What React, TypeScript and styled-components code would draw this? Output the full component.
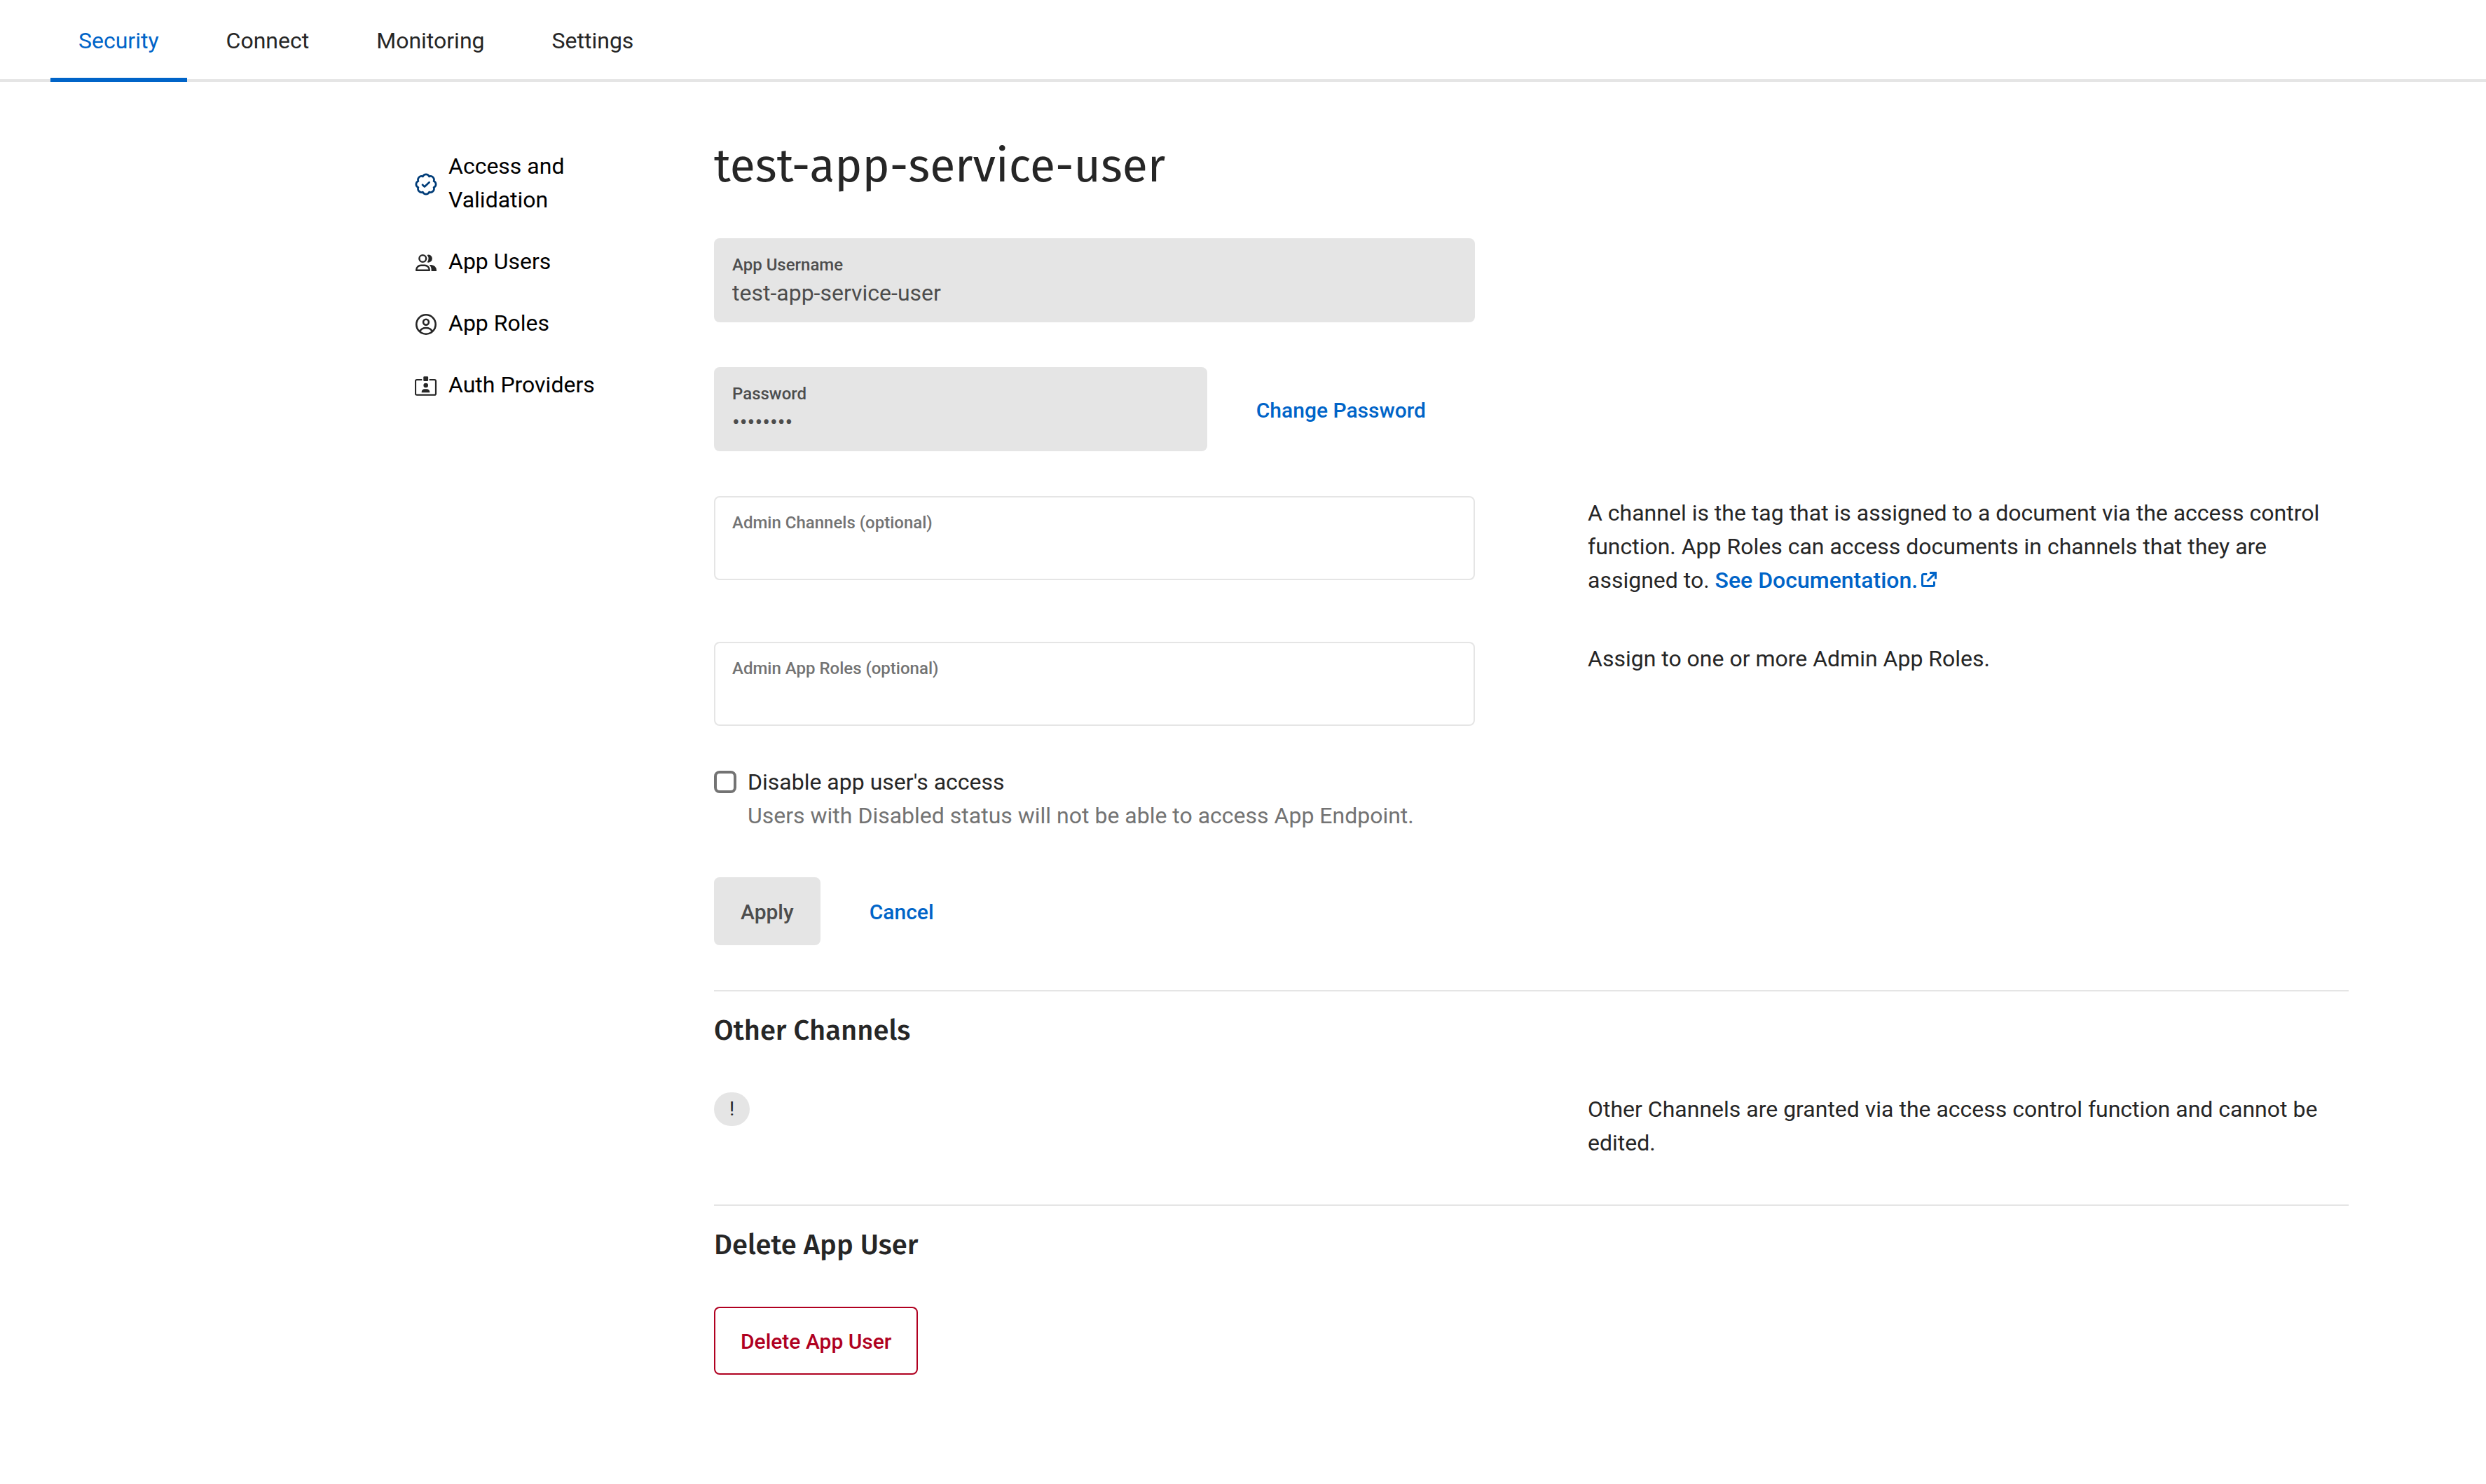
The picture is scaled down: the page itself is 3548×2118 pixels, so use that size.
import React, { useState } from "react";
import styled, { createGlobalStyle, css } from "styled-components";

const color = {
  ink: "#262626",
  body: "#4d4d4d",
  muted: "#737373",
  line: "#e5e5e5",
  link: "#0064c8",
  navy: "#003c78",
  danger: "#b00020",
};

const textFont = `Roboto, "Liberation Sans", sans-serif`;
const titleFont = `"Fira Sans", "Noto Sans", "Open Sans", sans-serif`;

const GlobalStyle = createGlobalStyle`
  *, *::before, *::after { box-sizing: border-box; }
  body {
    margin: 0;
    background: #fff;
    color: ${color.ink};
    font: 400 32px/48px ${textFont};
  }
  h1, h2, p, ul { margin: 0; padding: 0; }
  button, input { font: inherit; }
  a { text-decoration: none; }
`;

const TabBar = styled.nav`
  display: flex;
  gap: 16px;
  padding: 0 72px;
  border-bottom: 4px solid ${color.line};
`;

const Tab = styled.a<{ $active?: boolean }>`
  padding: 34px 40px 29px;
  margin-bottom: -4px;
  border-bottom: 6px solid ${(p) => (p.$active ? color.link : "transparent")};
  color: ${(p) => (p.$active ? color.link : color.ink)};
`;

const Page = styled.div`
  display: flex;
  gap: 160px;
  padding: 84px 196px 92px 592px;
`;

const SideNav = styled.ul`
  flex: 0 0 267px;
  display: flex;
  flex-direction: column;
  gap: 40px;
  padding-top: 12px;
  list-style: none;
`;

const SideLink = styled.a`
  display: flex;
  align-items: center;
  gap: 16px;
  color: #000;
`;

const SideIcon = styled.svg<{ $tone?: string }>`
  flex: none;
  width: 32px;
  height: 32px;
  margin-top: 4px;
  color: ${(p) => p.$tone || color.ink};
`;

const Main = styled.main`
  flex: 1;
  min-width: 0;
`;

const Title = styled.h1`
  font: 400 66px/72px ${titleFont};
`;

const Form = styled.form`
  display: flex;
  flex-direction: column;
  margin-top: 67px;
`;

const Row = styled.div<{ $space?: number }>`
  display: grid;
  grid-template-columns: minmax(0, 1fr) minmax(0, 1fr);
  column-gap: 161px;
  align-items: start;
  margin-bottom: ${(p) => p.$space ?? 64}px;
`;

const Inline = styled.div`
  display: flex;
  align-items: center;
  gap: 32px;
  padding-right: 32px;
`;

const Field = styled.div<{ $filled?: boolean }>`
  flex: 1;
  display: flex;
  flex-direction: column;
  height: 120px;
  padding: 20px 24px;
  border: 2px solid ${color.line};
  border-radius: 8px;
  background: ${(p) => (p.$filled ? color.line : "#fff")};
  color: ${(p) => (p.$filled ? color.body : color.muted)};
`;

const FieldLabel = styled.label`
  font-size: 24px;
  font-weight: 500;
  line-height: 32px;
`;

const FieldInput = styled.input`
  width: 100%;
  height: 48px;
  padding: 0;
  border: 0;
  outline: 0;
  background: transparent;
  color: inherit;
`;

const Hint = styled.p``;

const DocLink = styled.a`
  color: ${color.link};
  font-weight: 500;
`;

const LinkIcon = styled.svg`
  width: 24px;
  height: 24px;
  margin-left: 4px;
`;

const CheckRow = styled.div`
  display: grid;
  grid-template-columns: 32px 1fr;
  column-gap: 16px;
  align-items: center;
`;

const CheckBox = styled.input`
  appearance: none;
  width: 32px;
  height: 32px;
  margin: 0;
  border: 4px solid ${color.muted};
  border-radius: 8px;
  background: #fff;
  &:checked { background: ${color.link}; border-color: ${color.link}; }
`;

const CheckHelp = styled.p`
  grid-column: 2;
  color: ${color.muted};
`;

const Button = styled.button<{ $kind: "muted" | "text" | "danger" }>`
  padding: 25px 36px 23px;
  border: 2px solid transparent;
  border-radius: 8px;
  background: transparent;
  font-size: 30px;
  font-weight: 500;
  line-height: 45px;
  white-space: nowrap;
  ${(p) => p.$kind === "muted" && css`background: ${color.line}; border-color: ${color.line}; color: ${color.body};`}
  ${(p) => p.$kind === "text" && css`color: ${color.link};`}
  ${(p) => p.$kind === "danger" && css`border-color: ${color.danger}; color: ${color.danger};`}
`;

const Actions = styled(Inline)`
  padding: 64px 0;
`;

const Section = styled.section`
  border-top: 2px solid ${color.line};
  padding: 32px 0 64px;
`;

const SectionTitle = styled.h2`
  margin-bottom: 64px;
  font: 500 40px/48px ${titleFont};
`;

const Badge = styled.span`
  justify-self: start;
  padding: 0 22px;
  border-radius: 24px;
  background: ${color.line};
  font-size: 28px;
`;

const scallop = (() => {
  const lobes = 8;
  const pt = (a: number, r: number) =>
    `${(16 + r * Math.cos(a)).toFixed(2)} ${(16 + r * Math.sin(a)).toFixed(2)}`;
  const half = Math.PI / lobes;
  let d = `M${pt(-Math.PI / 2 - half, 12)}`;
  for (let i = 0; i < lobes; i++) {
    const end = -Math.PI / 2 - half + (i + 1) * half * 2;
    d += `A5 5 0 0 1 ${pt(end, 12)}`;
  }
  return d + "Z";
})();

const VerifiedIcon = () => (
  <SideIcon viewBox="0 0 32 32" fill="none" stroke="currentColor" strokeWidth="2.7" strokeLinejoin="round" strokeLinecap="round" $tone={color.navy} aria-hidden>
    <path d={scallop} />
    <path d="M11 16.8l2.9 2.6 6.7-6.2" />
  </SideIcon>
);

const UsersIcon = () => (
  <SideIcon viewBox="0 0 32 32" fill="none" stroke="currentColor" strokeWidth="2.4" aria-hidden>
    <circle cx="11.3" cy="10" r="4.9" />
    <path d="M2.2 26.8v-.6a6.6 6.6 0 0 1 6.6-6.4h5.4a6.6 6.6 0 0 1 6.6 6.4v.6z" strokeLinejoin="round" />
    <path d="M17.6 4.9a5.5 5.5 0 1 1 0 10.4a8.500 8.500 0 0 0 0-10.400z" fill="currentColor" stroke="none" />
    <path d="M21.200 19h2.200a7.800 7.800 0 0 1 7.600 7.800v1.200h-7.400v-1.600a9.600 9.600 0 0 0-3-7.400z" fill="currentColor" stroke="none" />
  </SideIcon>
);

const RoleIcon = () => (
  <SideIcon viewBox="0 0 32 32" fill="none" stroke="currentColor" strokeWidth="2.6" aria-hidden>
    <circle cx="16" cy="16" r="13.7" />
    <circle cx="16" cy="12.7" r="3.9" />
    <path d="M7 26C8.800 22.500 12.200 21 16 21s7.200 1.500 9 5" />
  </SideIcon>
);

const ProviderIcon = () => (
  <SideIcon viewBox="0 0 32 32" fill="none" stroke="currentColor" strokeWidth="2.2" aria-hidden>
    <path d="M10.300 7H3a2 2 0 0 0-2 2v17.700a2 2 0 0 0 2 2h25a2 2 0 0 0 2-2V9a2 2 0 0 0-2-2h-7.300" />
    <rect x="12.300" y="2.300" width="6.800" height="6.700" rx="1.200" fill="currentColor" stroke="none" />
    <circle cx="15.700" cy="15" r="3.300" fill="currentColor" stroke="none" />
    <path d="M9.700 25.300v-.8a4.200 4.200 0 0 1 4.200-4.200h3.200a4.200 4.200 0 0 1 4.200 4.200v.8z" fill="currentColor" stroke="none" />
  </SideIcon>
);

const ExternalIcon = () => (
  <LinkIcon viewBox="0 0 24 24" fill="none" stroke="currentColor" strokeWidth="3" aria-hidden>
    <path d="M9.300 4.500H4.500a2 2 0 0 0-2 2v13a2 2 0 0 0 2 2h13a2 2 0 0 0 2-2V14.700" />
    <path d="M13 2.500h8.500v8.700M21 3L9.500 14.500" />
  </LinkIcon>
);

const tabs = ["Security", "Connect", "Monitoring", "Settings"];

const sideItems = [
  { label: "Access and Validation", Icon: VerifiedIcon },
  { label: "App Users", Icon: UsersIcon },
  { label: "App Roles", Icon: RoleIcon },
  { label: "Auth Providers", Icon: ProviderIcon },
];

export default function App() {
  const [disabled, setDisabled] = useState(false);
  return (
    <>
      <GlobalStyle />
      <TabBar>
        {tabs.map((t, i) => (
          <Tab key={t} href="#" $active={i === 0}>{t}</Tab>
        ))}
      </TabBar>
      <Page>
        <SideNav>
          {sideItems.map(({ label, Icon }) => (
            <li key={label}>
              <SideLink href="#">
                <Icon />
                <span>{label}</span>
              </SideLink>
            </li>
          ))}
        </SideNav>
        <Main>
          <Title>test-app-service-user</Title>
          <Form onSubmit={(e) => e.preventDefault()}>
            <Row>
              <Field $filled>
                <FieldLabel htmlFor="username">App Username</FieldLabel>
                <FieldInput id="username" readOnly value="test-app-service-user" />
              </Field>
            </Row>
            <Row>
              <Inline>
                <Field $filled>
                  <FieldLabel htmlFor="password">Password</FieldLabel>
                  <FieldInput id="password" type="password" readOnly value="password" />
                </Field>
                <Button type="button" $kind="text">Change Password</Button>
              </Inline>
            </Row>
            <Row>
              <Field>
                <FieldLabel htmlFor="channels">Admin Channels (optional)</FieldLabel>
                <FieldInput id="channels" />
              </Field>
              <Hint>
                A channel is the tag that is assigned to a document via the access control function. App Roles can
                access documents in channels that they are assigned to.{" "}
                <DocLink href="#">See Documentation.<ExternalIcon /></DocLink>
              </Hint>
            </Row>
            <Row $space={56}>
              <Field>
                <FieldLabel htmlFor="roles">Admin App Roles (optional)</FieldLabel>
                <FieldInput id="roles" />
              </Field>
              <Hint>Assign to one or more Admin App Roles.</Hint>
            </Row>
            <CheckRow>
              <CheckBox id="disable" type="checkbox" checked={disabled} onChange={(e) => setDisabled(e.target.checked)} />
              <label htmlFor="disable">Disable app user's access</label>
              <CheckHelp>Users with Disabled status will not be able to access App Endpoint.</CheckHelp>
            </CheckRow>
            <Actions>
              <Button type="submit" $kind="muted">Apply</Button>
              <Button type="button" $kind="text">Cancel</Button>
            </Actions>
          </Form>
          <Section>
            <SectionTitle>Other Channels</SectionTitle>
            <Row $space={0}>
              <Badge>!</Badge>
              <Hint>Other Channels are granted via the access control function and cannot be edited.</Hint>
            </Row>
          </Section>
          <Section>
            <SectionTitle>Delete App User</SectionTitle>
            <Button type="button" $kind="danger">Delete App User</Button>
          </Section>
        </Main>
      </Page>
    </>
  );
}
